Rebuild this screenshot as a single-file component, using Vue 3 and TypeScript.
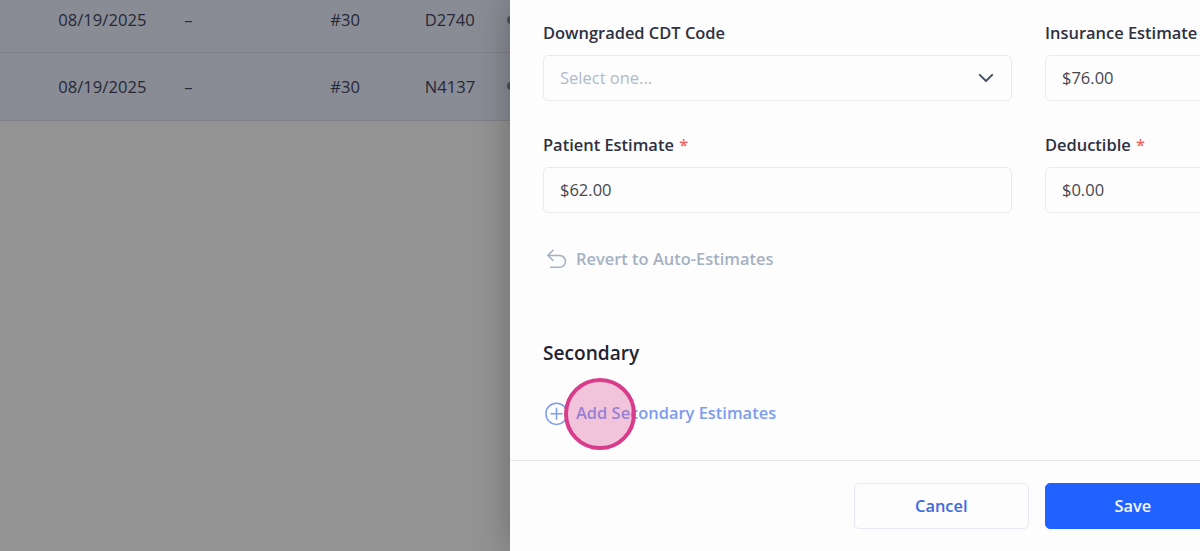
<script setup lang="ts">
interface ClaimRow {
  date: string
  site: string
  tooth: string
  code: string
}

const rows: ClaimRow[] = [
  { date: '08/19/2025', site: '–', tooth: '#30', code: 'D2740' },
  { date: '08/19/2025', site: '–', tooth: '#30', code: 'N4137' },
]
</script>

<template>
  <div class="screen">
    <main class="table">
      <div v-for="row in rows" :key="row.code" class="row">
        <span>{{ row.date }}</span>
        <span>{{ row.site }}</span>
        <span>{{ row.tooth }}</span>
        <span>{{ row.code }}</span>
        <span class="dot"></span>
      </div>
    </main>

    <aside class="drawer">
      <section class="content">
        <div class="fields">
          <div class="field">
            <label class="label">Downgraded CDT Code</label>
            <div class="input placeholder">
              <span>Select one...</span>
              <svg class="chevron" width="16" height="10" viewBox="0 0 16 10"><path d="M1.8 1.8 8 8l6.2-6.2" /></svg>
            </div>
          </div>
          <div class="field">
            <label class="label">Insurance Estimate</label>
            <div class="input">$76.00</div>
          </div>
          <div class="field">
            <label class="label">Patient Estimate <b class="star">*</b></label>
            <div class="input">$62.00</div>
          </div>
          <div class="field">
            <label class="label">Deductible <b class="star">*</b></label>
            <div class="input">$0.00</div>
          </div>
        </div>

        <div class="link revert">
          <svg width="26" height="26" viewBox="0 0 26 26"><path d="M10 4.2 4.9 9.4l5.1 5.1M4.9 9.4h11.7a5.9 5.9 0 0 1 0 11.8H7.6" /></svg>
          <span class="text">Revert to Auto-Estimates</span>
        </div>

        <h2 class="heading">Secondary</h2>

        <div class="link add">
          <svg width="26" height="26" viewBox="0 0 26 26"><circle cx="13.5" cy="13.8" r="10.6" /><path d="M13.5 8.3v11M8 13.8h11" /></svg>
          <span class="text">Add Secondary Estimates</span>
          <i class="pointer"></i>
        </div>
      </section>

      <footer class="footer">
        <button class="btn cancel">Cancel</button>
        <button class="btn save">Save</button>
      </footer>
    </aside>
  </div>
</template>

<style>
body {
  margin: 0;
  overflow: hidden;
}
</style>

<style scoped>
.screen {
  display: flex;
  width: 1200px;
  height: 551px;
  overflow: hidden;
  background: #939393;
  font-family: "Open Sans", "Noto Sans", sans-serif;
  font-size: 16.6px;
}
.table {
  flex: 0 0 510px;
  overflow: hidden;
  margin-top: -14px;
}
.row {
  display: grid;
  grid-template-columns: 126px 146px 94.5px 81.5px 20px;
  align-items: center;
  box-sizing: border-box;
  height: 67px;
  padding: 1px 0 0 58.3px;
  border-bottom: 1.5px solid #7e8087;
  background: #8a8c95;
  color: #262838;
}
.row:last-child {
  height: 67.5px;
  padding-top: 0;
}
.dot {
  width: 8px;
  height: 8px;
  margin-left: 1px;
  border-radius: 50%;
  background: #4b5358;
}
.drawer {
  position: relative;
  display: flex;
  flex-direction: column;
  box-sizing: border-box;
  width: 690px;
  flex: none;
  background: #fdfdfd;
  box-shadow: 0 0 34px rgba(0, 0, 0, 0.28);
}
.content {
  height: 460px;
  padding-left: 33px;
  box-sizing: border-box;
}
.fields {
  display: grid;
  grid-template-columns: 469px 469px;
  gap: 20px 33px;
  padding-top: 9px;
}
.field {
  height: 92px;
}
.label {
  display: block;
  height: 46px;
  line-height: 47px;
  font-size: 16.45px;
  font-weight: 600;
  color: #2e3040;
  white-space: pre;
}
.star {
  margin-left: 1px;
  font-weight: 600;
  color: #f46464;
}
.input {
  display: flex;
  align-items: center;
  justify-content: space-between;
  box-sizing: border-box;
  height: 46px;
  padding: 0 17px 2px 16px;
  border: 1px solid #e9ebf0;
  border-radius: 5px;
  font-size: 16.5px;
  color: #454750;
}
.placeholder {
  color: #b0bacb;
}
.chevron {
  position: relative;
  top: 1px;
}
.chevron path {
  fill: none;
  stroke: #454f63;
  stroke-width: 1.9;
  stroke-linecap: round;
  stroke-linejoin: round;
}
.link {
  position: relative;
  display: flex;
  align-items: center;
  gap: 7px;
  height: 30px;
  font-size: 16.45px;
  font-weight: 600;
}
.link svg {
  fill: none;
  stroke: currentColor;
  stroke-width: 1.5;
  stroke-linecap: round;
  stroke-linejoin: round;
}
.text {
  padding-bottom: 2px;
}
.revert {
  margin-top: 31px;
  color: #a5b1c3;
}
.heading {
  height: 30px;
  margin: 64px 0 0;
  font-size: 19.1px;
  font-weight: 600;
  line-height: 30px;
  color: #20222f;
}
.add {
  margin-top: 30px;
  color: #7c9cf0;
}
.pointer {
  position: absolute;
  left: 21px;
  top: -20.5px;
  box-sizing: border-box;
  width: 72px;
  height: 72px;
  border: 4px solid #d83c8b;
  border-radius: 50%;
  background: rgba(216, 60, 139, 0.29);
}
.footer {
  display: flex;
  gap: 16px;
  box-sizing: border-box;
  height: 91px;
  padding: 22px 0 0 343.5px;
  border-top: 1px solid #e5e7ec;
}
.btn {
  flex: none;
  box-sizing: border-box;
  width: 175.5px;
  height: 46px;
  padding: 0 0 2px;
  border: 1px solid #e5e9f1;
  border-radius: 5px;
  background: transparent;
  font: 600 16.4px "Open Sans", "Noto Sans", sans-serif;
  color: #3b69e5;
}
.save {
  border-color: #1f62ff;
  background: #1f62ff;
  color: #f3f6ff;
}
</style>
